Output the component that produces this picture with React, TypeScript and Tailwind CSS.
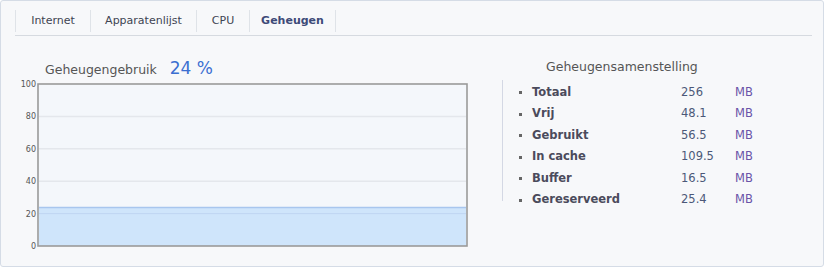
const tabs = [
  { label: "Internet", w: "w-[75px]" },
  { label: "Apparatenlijst", w: "w-[106px]" },
  { label: "CPU", w: "w-[53px]" },
  { label: "Geheugen", w: "w-[86px]", active: true },
];

const rows = [
  { name: "Totaal", value: "256" },
  { name: "Vrij", value: "48.1" },
  { name: "Gebruikt", value: "56.5" },
  { name: "In cache", value: "109.5" },
  { name: "Buffer", value: "16.5" },
  { name: "Gereserveerd", value: "25.4" },
];

const usage = 24;

const MemoryChart = () => {
  const top = 5;
  const h = 162;
  const yFor = (v: number) => top + h - (v / 100) * h;
  return (
    <svg width="470" height="172" className="block">
      {[100, 80, 60, 40, 20, 0].map((v) => (
        <text
          key={v}
          x="35"
          y={yFor(v) + 3}
          textAnchor="end"
          fontSize="8"
          fontFamily="DejaVu Sans, sans-serif"
          fill="#555"
        >
          {v}
        </text>
      ))}
      <rect x="37" y={top} width="429" height={h} fill="#f4f7fb" />
      {[80, 60, 40, 20].map((v) => (
        <line key={v} x1="38" x2="465" y1={yFor(v)} y2={yFor(v)} stroke="#e4e7ec" strokeWidth="1.5" />
      ))}
      <rect x="38" y={yFor(usage)} width="427" height={top + h - yFor(usage)} fill="#cfe5fb" />
      <line x1="38" x2="465" y1={yFor(usage) + 0.5} y2={yFor(usage) + 0.5} stroke="#a8c6ee" strokeWidth="1.5" />
      <line x1="38" x2="465" y1={yFor(20)} y2={yFor(20)} stroke="#bfd6f2" strokeWidth="1" />
      <rect x="37" y={top} width="429" height={h} fill="none" stroke="#9a9a9a" strokeWidth="1.6" />
    </svg>
  );
};

const App = () => {
  return (
    <div className="w-[826px] h-[269px] bg-white font-['DejaVu_Sans',sans-serif]">
      <div className="w-[824px] h-[267px] border border-[#d5dce6] rounded-[3px] bg-[#f7f8fa] pl-[14px] pr-[11px] pt-[9px]">
        <div className="flex h-[26px] border-b border-[#d6dae0]">
          {tabs.map((t) => (
            <div
              key={t.label}
              className={`${t.w} h-[22px] flex items-center justify-center border-l border-[#dfe3e8] text-[11px] ${
                t.active ? "font-bold text-[#3d4a78]" : "text-[#404452]"
              }`}
            >
              {t.label}
            </div>
          ))}
          <div className="h-[22px] border-l border-[#dfe3e8]" />
        </div>

        <div className="flex">
          <div className="w-[501px] -ml-[14px]">
            <div className="flex items-baseline mt-[20px] ml-[44px] h-[20px]">
              <span className="text-[12.5px] text-[#555]">Geheugengebruik</span>
              <span className="text-[17px] text-[#3b6fd1] ml-[13px]">{usage} %</span>
            </div>
            <div className="mt-[3px]">
              <MemoryChart />
            </div>
          </div>

          <div className="flex-1">
            <div className="mt-[22px] pl-[44px] text-[12.5px] text-[#555]">
              Geheugensamenstelling
            </div>
            <ul className="mt-[3px] border-l border-[#d4d8e4] pl-[16px] pt-[2px] h-[121px]">
              {rows.map((r) => (
                <li key={r.name} className="flex items-center h-[21.5px] text-[11.5px]">
                  <span className="w-[3px] h-[3px] bg-[#666] mr-[10px]" />
                  <span className="w-[149px] font-bold text-[#4b4b5c]">{r.name}</span>
                  <span className="w-[54px] text-[#4b5878]">{r.value}</span>
                  <span className="text-[#6a54a8]">MB</span>
                </li>
              ))}
            </ul>
          </div>
        </div>
      </div>
    </div>
  );
};

export default App;
